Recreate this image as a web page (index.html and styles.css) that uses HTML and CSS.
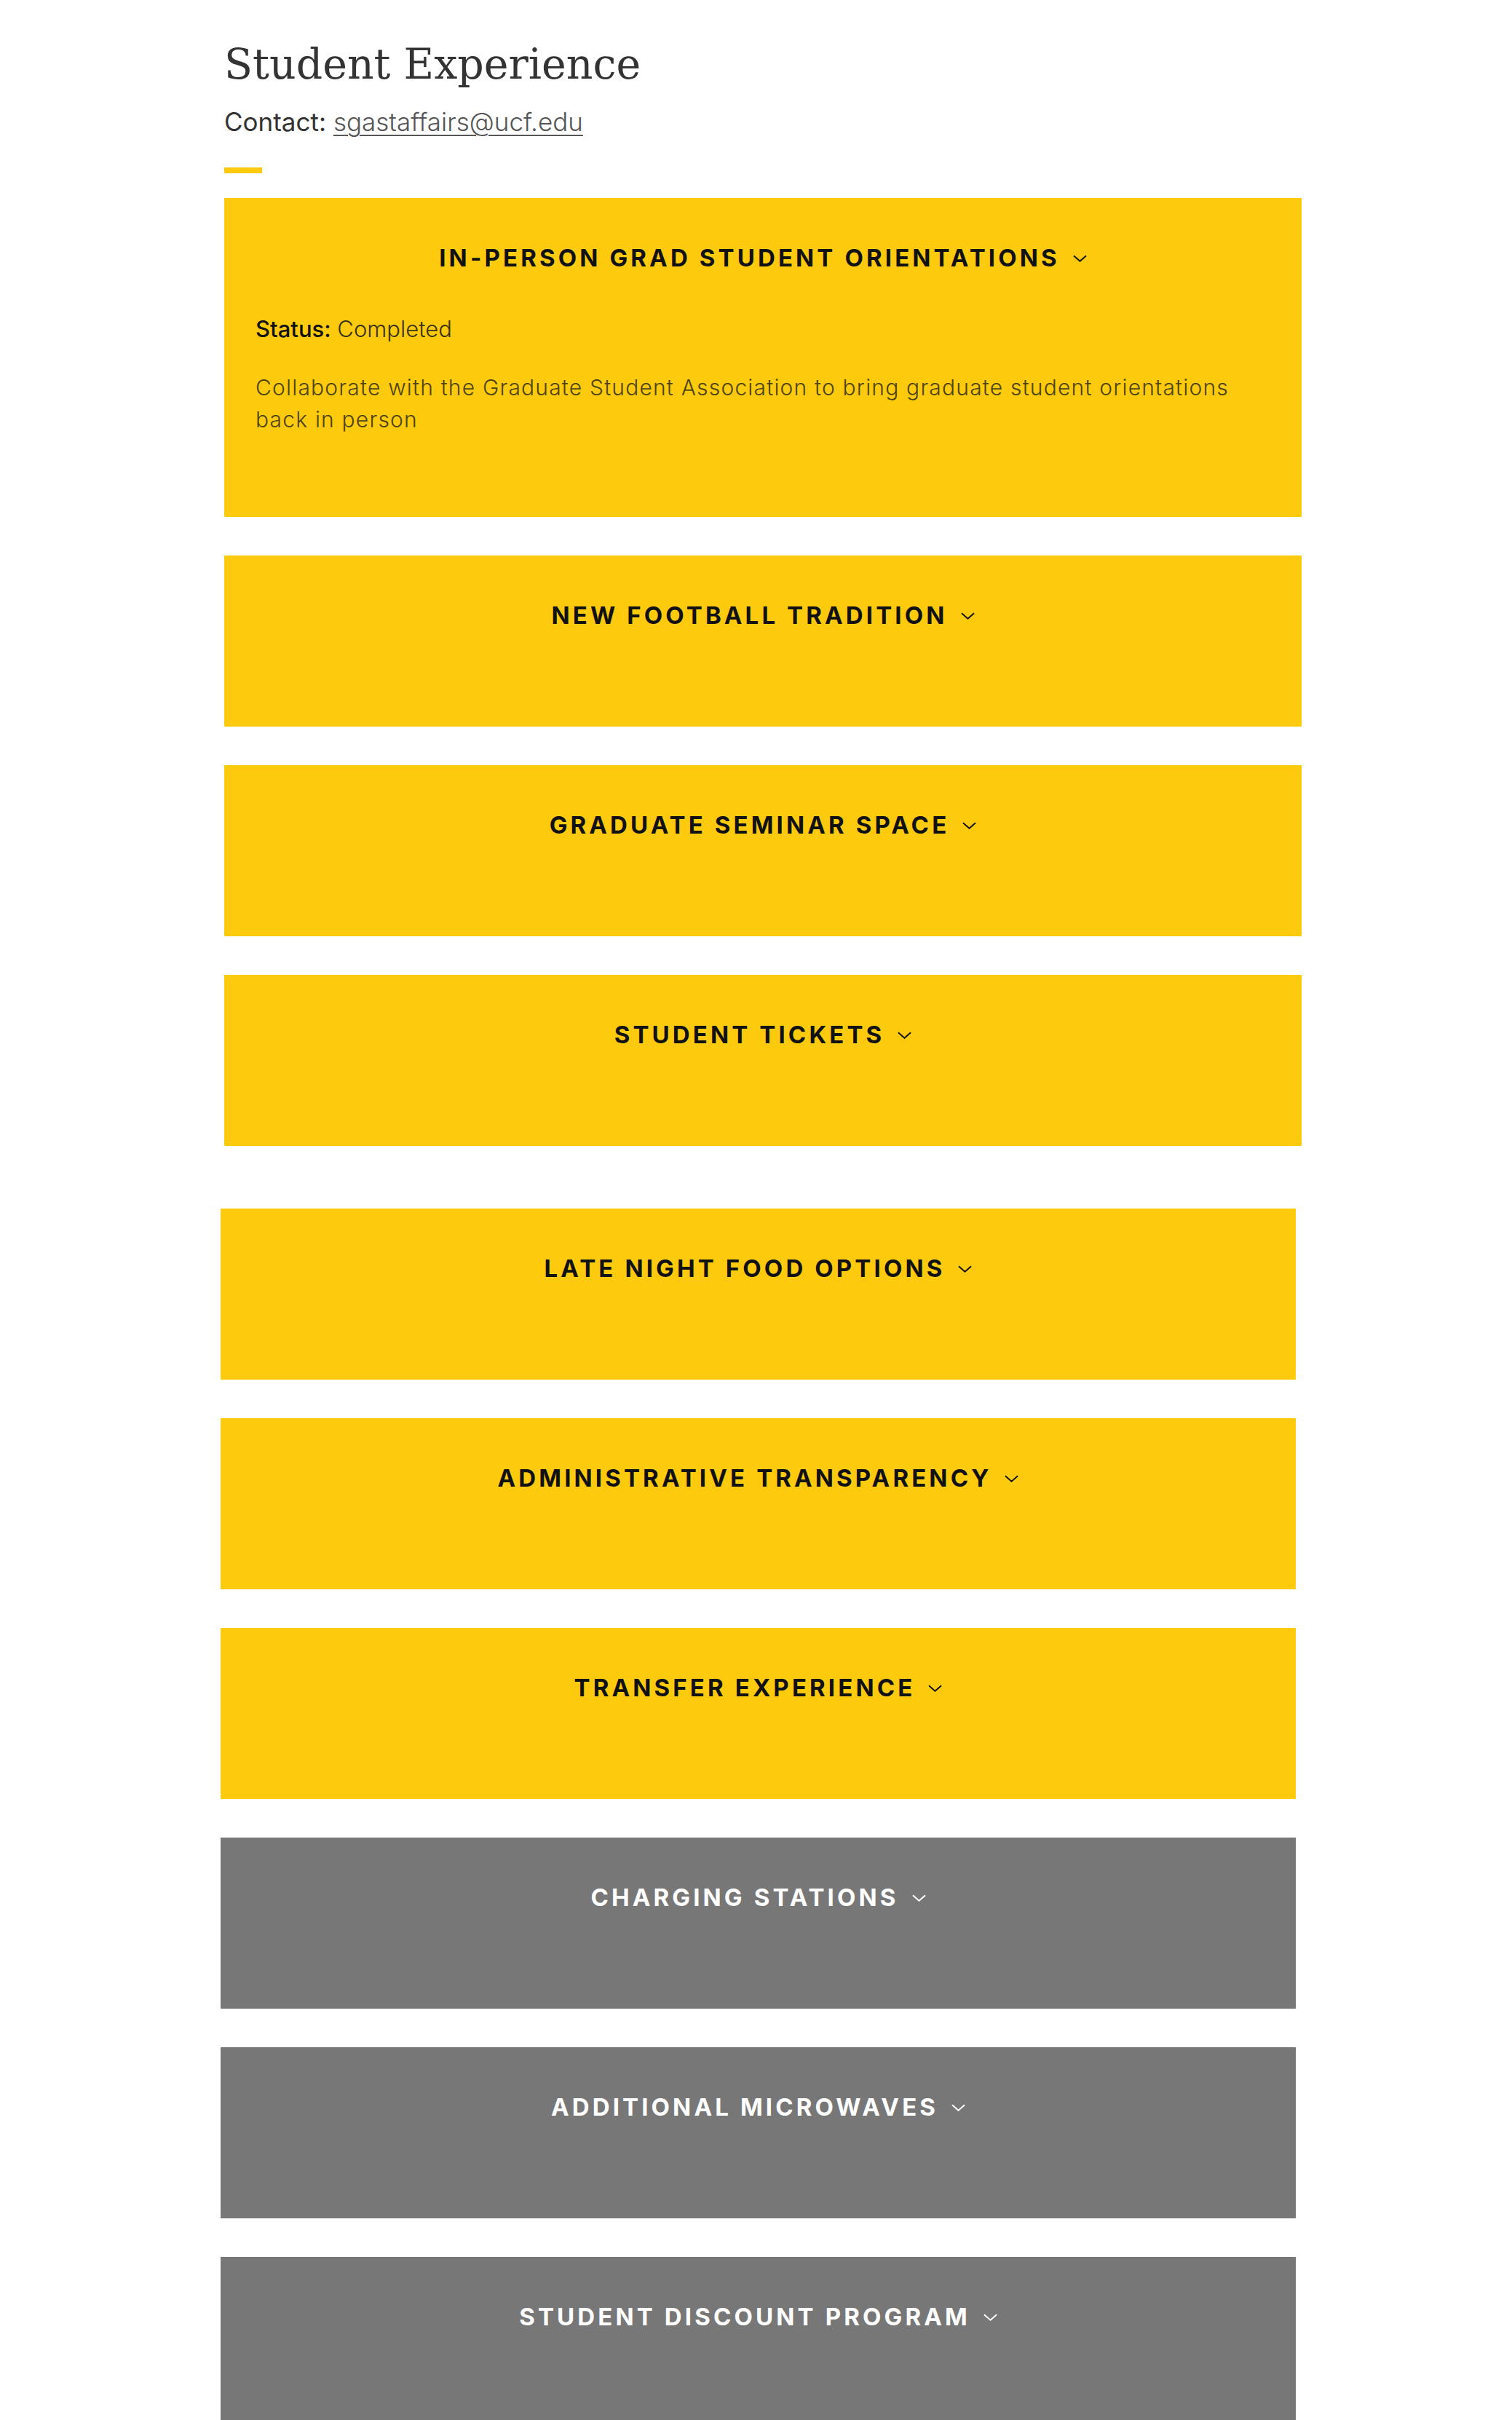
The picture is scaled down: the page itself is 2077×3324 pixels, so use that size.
FILE: index.html
```html
<!DOCTYPE html>
<html lang="en">
<head>
<meta charset="utf-8">
<title>Student Experience</title>
<link rel="stylesheet" href="styles.css">
</head>
<body>
<main class="page">
  <header class="intro">
    <h1 class="title">Student Experience</h1>
    <p class="contact"><span class="contact-label">Contact:</span> <a href="#" class="contact-link">sgastaffairs@ucf.edu</a></p>
    <div class="rule"></div>
  </header>

  <section class="group group-a">
    <article class="card gold open">
      <h2 class="card-head"><span>IN-PERSON GRAD STUDENT ORIENTATIONS</span><svg class="chev" viewBox="0 0 20 10"><path d="M1 1 L10 9 L19 1"/></svg></h2>
      <div class="card-body">
        <p class="status"><strong>Status:</strong> Completed</p>
        <p class="desc">Collaborate with the Graduate Student Association to bring graduate student orientations back in person</p>
      </div>
    </article>
    <article class="card gold">
      <h2 class="card-head"><span>NEW FOOTBALL TRADITION</span><svg class="chev" viewBox="0 0 20 10"><path d="M1 1 L10 9 L19 1"/></svg></h2>
    </article>
    <article class="card gold">
      <h2 class="card-head"><span>GRADUATE SEMINAR SPACE</span><svg class="chev" viewBox="0 0 20 10"><path d="M1 1 L10 9 L19 1"/></svg></h2>
    </article>
    <article class="card gold">
      <h2 class="card-head"><span>STUDENT TICKETS</span><svg class="chev" viewBox="0 0 20 10"><path d="M1 1 L10 9 L19 1"/></svg></h2>
    </article>
  </section>

  <section class="group group-b">
    <article class="card gold">
      <h2 class="card-head"><span>LATE NIGHT FOOD OPTIONS</span><svg class="chev" viewBox="0 0 20 10"><path d="M1 1 L10 9 L19 1"/></svg></h2>
    </article>
    <article class="card gold">
      <h2 class="card-head"><span>ADMINISTRATIVE TRANSPARENCY</span><svg class="chev" viewBox="0 0 20 10"><path d="M1 1 L10 9 L19 1"/></svg></h2>
    </article>
    <article class="card gold">
      <h2 class="card-head"><span>TRANSFER EXPERIENCE</span><svg class="chev" viewBox="0 0 20 10"><path d="M1 1 L10 9 L19 1"/></svg></h2>
    </article>
    <article class="card gray">
      <h2 class="card-head"><span>CHARGING STATIONS</span><svg class="chev" viewBox="0 0 20 10"><path d="M1 1 L10 9 L19 1"/></svg></h2>
    </article>
    <article class="card gray">
      <h2 class="card-head"><span>ADDITIONAL MICROWAVES</span><svg class="chev" viewBox="0 0 20 10"><path d="M1 1 L10 9 L19 1"/></svg></h2>
    </article>
    <article class="card gray">
      <h2 class="card-head"><span>STUDENT DISCOUNT PROGRAM</span><svg class="chev" viewBox="0 0 20 10"><path d="M1 1 L10 9 L19 1"/></svg></h2>
    </article>
  </section>
</main>
</body>
</html>
```

FILE: styles.css
```css
html, body {
  margin: 0;
  padding: 0;
  background: #ffffff;
}

body {
  font-family: Inter, "Noto Sans", "Liberation Sans", sans-serif;
  color: #333333;
}

.page {
  padding: 0 0 120px 0;
}

.intro {
  margin-left: 308px;
  padding-top: 52px;
}

.title {
  font-family: "DejaVu Serif", "Liberation Serif", serif;
  font-weight: normal;
  font-size: 57px;
  line-height: 72px;
  color: #333333;
  margin: 0;
}

.contact {
  margin: 22px 0 0 0;
  font-size: 35px;
  line-height: 42px;
  color: #333333;
}

.contact-label {
  font-weight: 400;
}

.contact-link {
  color: #555555;
  font-weight: 300;
  text-decoration: underline;
  text-decoration-thickness: 2px;
  text-underline-offset: 5px;
}

.rule {
  width: 52px;
  height: 8px;
  background: #fdca0e;
  margin-top: 42px;
}

.group {
  display: flex;
  flex-direction: column;
  gap: 53px;
}

.group-a {
  margin-left: 308px;
  width: 1480px;
  margin-top: 34px;
}

.group-b {
  margin-left: 303px;
  width: 1477px;
  margin-top: 86px;
}

.card {
  min-height: 235px;
  box-sizing: border-box;
  padding: 62px 43px 0 43px;
}

.card.open {
  min-height: 438px;
}

.gold {
  background: #fdca0e;
  color: #111111;
}

.gray {
  background: #777777;
  color: #ffffff;
}

.card-head {
  margin: 0;
  display: flex;
  justify-content: center;
  align-items: center;
  gap: 18px;
  font-size: 33px;
  line-height: 40px;
  font-weight: 700;
  letter-spacing: 0.125em;
}

.chev {
  width: 19px;
  height: 10px;
  fill: none;
  stroke: currentColor;
  stroke-width: 2;
  margin-top: 2px;
}

.card-body {
  padding-top: 58px;
}

.status {
  margin: 0;
  font-size: 31px;
  line-height: 40px;
  font-weight: 300;
  color: #3a3210;
}

.status strong {
  font-weight: 500;
  color: #111111;
}

.desc {
  margin: 38px 0 0 0;
  font-size: 30px;
  line-height: 44px;
  font-weight: 300;
  letter-spacing: 0.04em;
  color: #4e4312;
  padding-right: 40px;
}
```
